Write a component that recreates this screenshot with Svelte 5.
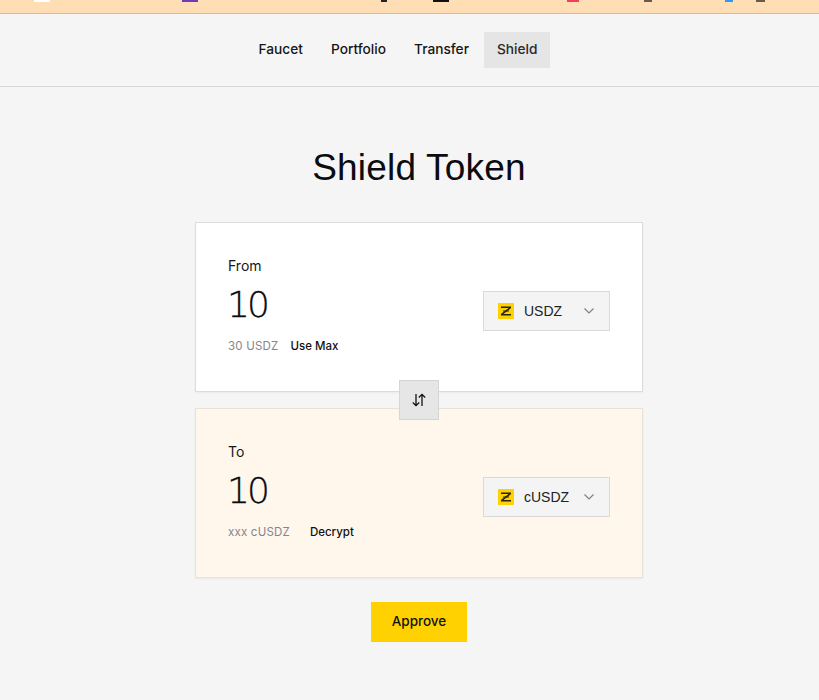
<script>
  const links = ["Faucet", "Portfolio", "Transfer", "Shield"];
  // tops of the icons cut off by the edge of the page
  const scraps = [
    { left: 34, width: 16, height: 1, color: "#fff" },
    { left: 132, width: 16, height: 1, color: "#6f3cc0" },
    { left: 183, width: 6, height: 1, color: "#222" },
    { left: 46, width: 16, height: 1, color: "#111" },
    { left: 118, width: 12, height: 1, color: "#f0405a" },
    { left: 65, width: 8, height: 1, color: "#6b5a48" },
    { left: 73, width: 8, height: 1, color: "#2a9bf0" },
    { left: 23, width: 9, height: 1, color: "#6b5a48" }
  ];
</script>

<div class="page">
  <div class="topbar">
    {#each scraps as s}
      <span style="margin-left: {s.left}px; width: {s.width}px; height: {s.height + 1}px; background: {s.color}"></span>
    {/each}
  </div>

  <nav class="nav">
    {#each links as link}
      <a href="#{link}" class:active={link === "Shield"}>{link}</a>
    {/each}
  </nav>

  <main class="main">
    <h1>Shield Token</h1>

    <div class="cards">
      <section class="card">
        <div class="left">
          <div class="label">From</div>
          <div class="amount">10</div>
          <div class="meta">
            <span class="balance">30 USDZ</span>
            <span class="action">Use Max</span>
          </div>
        </div>
        <button class="select">
          <svg class="logo" viewBox="0 0 16 16" width="16" height="16">
            <rect width="16" height="16" fill="#ffd100" />
            <path d="M3 4.2h10M12.4 4.6 3.6 11.4M3 11.8h10" stroke="#2a2410" stroke-width="1.6" fill="none" />
            <path d="M5 8h6" stroke="#2a2410" stroke-width="1" fill="none" />
          </svg>
          <span class="token">USDZ</span>
          <svg class="chev" viewBox="0 0 12 8" width="12" height="8">
            <path d="M1.5 1.5 6 6l4.5-4.5" stroke="#808080" stroke-width="1.2" fill="none" />
          </svg>
        </button>
      </section>

      <button class="swap" aria-label="Swap">
        <svg viewBox="0 0 16 16" width="16" height="16">
          <path d="M5 2v11.5M1.8 10.5 5 13.7l3.2-3.2M11 14V2.5M7.8 5.5 11 2.3l3.2 3.2" stroke="#111" stroke-width="1.3" fill="none" />
        </svg>
      </button>

      <section class="card to">
        <div class="left">
          <div class="label">To</div>
          <div class="amount">10</div>
          <div class="meta wide">
            <span class="balance">xxx cUSDZ</span>
            <span class="action">Decrypt</span>
          </div>
        </div>
        <button class="select">
          <svg class="logo" viewBox="0 0 16 16" width="16" height="16">
            <rect width="16" height="16" fill="#ffd100" />
            <path d="M3 4.2h10M12.4 4.6 3.6 11.4M3 11.8h10" stroke="#2a2410" stroke-width="1.6" fill="none" />
            <path d="M5 8h6" stroke="#2a2410" stroke-width="1" fill="none" />
          </svg>
          <span class="token">cUSDZ</span>
          <svg class="chev" viewBox="0 0 12 8" width="12" height="8">
            <path d="M1.5 1.5 6 6l4.5-4.5" stroke="#808080" stroke-width="1.2" fill="none" />
          </svg>
        </button>
      </section>
    </div>

    <button class="approve">Approve</button>
  </main>
</div>

<style>
  :global(body) {
    background: #f5f5f5;
  }

  .page {
    font-family: Inter, "Liberation Sans", sans-serif;
    color: #111;
    height: 700px;
    overflow: hidden;
    background: #f5f5f5;
  }

  .topbar {
    display: flex;
    align-items: flex-start;
    height: 13px;
    background: #ffdeb5;
    border-bottom: 1px solid #dfbb92;
  }

  .topbar span {
    flex: none;
  }

  .nav {
    display: flex;
    justify-content: center;
    height: 73px;
    padding: 18px 26px 0 0;
    box-sizing: border-box;
    border-bottom: 1px solid #d9d9d9;
  }

  .nav a {
    box-sizing: border-box;
    height: 36px;
    padding: 0 12.5px 2px;
    margin-left: 3px;
    display: flex;
    align-items: center;
    font-size: 13.7px;
    font-weight: 500;
    color: #161616;
    text-decoration: none;
  }

  .nav a.active {
    background: #e5e5e5;
    color: #2a2a2a;
  }

  .main {
    display: flex;
    flex-direction: column;
    align-items: center;
    padding-left: 19px;
  }

  h1 {
    margin: 58px 0 31px;
    font-family: "Liberation Sans", sans-serif;
    font-size: 37px;
    line-height: 46px;
    font-weight: 400;
    letter-spacing: 0.2px;
    color: #0b0b12;
  }

  .cards {
    position: relative;
    width: 448px;
    display: flex;
    flex-direction: column;
    gap: 16px;
  }

  .card {
    box-sizing: border-box;
    height: 170px;
    padding: 0 32px;
    background: #fff;
    border: 1px solid #dcdcdc;
    box-shadow: 0 1px 2px rgba(0, 0, 0, 0.05);
    display: flex;
    align-items: center;
    justify-content: space-between;
  }

  .card.to {
    background: #fff6ec;
    border-color: #e6e1da;
  }

  .left {
    align-self: flex-start;
    padding-top: 34px;
    display: flex;
    flex-direction: column;
  }

  .label {
    font-size: 14px;
    line-height: 18px;
    color: #161616;
  }

  .amount {
    margin: 8px 0 0 -1px;
    font-family: "DejaVu Sans", sans-serif;
    font-size: 36px;
    line-height: 44px;
    font-weight: 200;
    letter-spacing: -3px;
    -webkit-text-stroke: 0.3px #0b0b12;
    color: #0b0b12;
  }

  .meta {
    margin-top: 11px;
    display: flex;
    gap: 12px;
    font-size: 11.5px;
    line-height: 16px;
  }

  .meta.wide {
    gap: 20px;
  }

  .balance {
    color: #85858d;
    letter-spacing: 0.2px;
  }

  .action {
    color: #111;
    font-weight: 500;
  }

  .select {
    box-sizing: border-box;
    width: 127px;
    height: 40px;
    margin-top: 8px;
    padding: 0 14px;
    display: flex;
    align-items: center;
    background: #f4f4f5;
    border: 1px solid #d9d9d9;
    font-family: "Liberation Sans", sans-serif;
    color: #222;
    cursor: pointer;
  }

  .logo {
    flex: none;
  }

  .token {
    margin-left: 10px;
    font-size: 14px;
  }

  .chev {
    flex: none;
    margin-left: auto;
  }

  .swap {
    position: absolute;
    left: 204px;
    top: 158px;
    box-sizing: border-box;
    width: 40px;
    height: 40px;
    padding: 0;
    display: flex;
    align-items: center;
    justify-content: center;
    background: #e6e6e6;
    border: 1px solid #d5d5d5;
    cursor: pointer;
  }

  .approve {
    margin-top: 24px;
    width: 96px;
    height: 40px;
    padding: 0 0 2px;
    border: none;
    background: #ffd100;
    font-family: inherit;
    font-size: 13.5px;
    font-weight: 500;
    color: #111;
    cursor: pointer;
  }
</style>
